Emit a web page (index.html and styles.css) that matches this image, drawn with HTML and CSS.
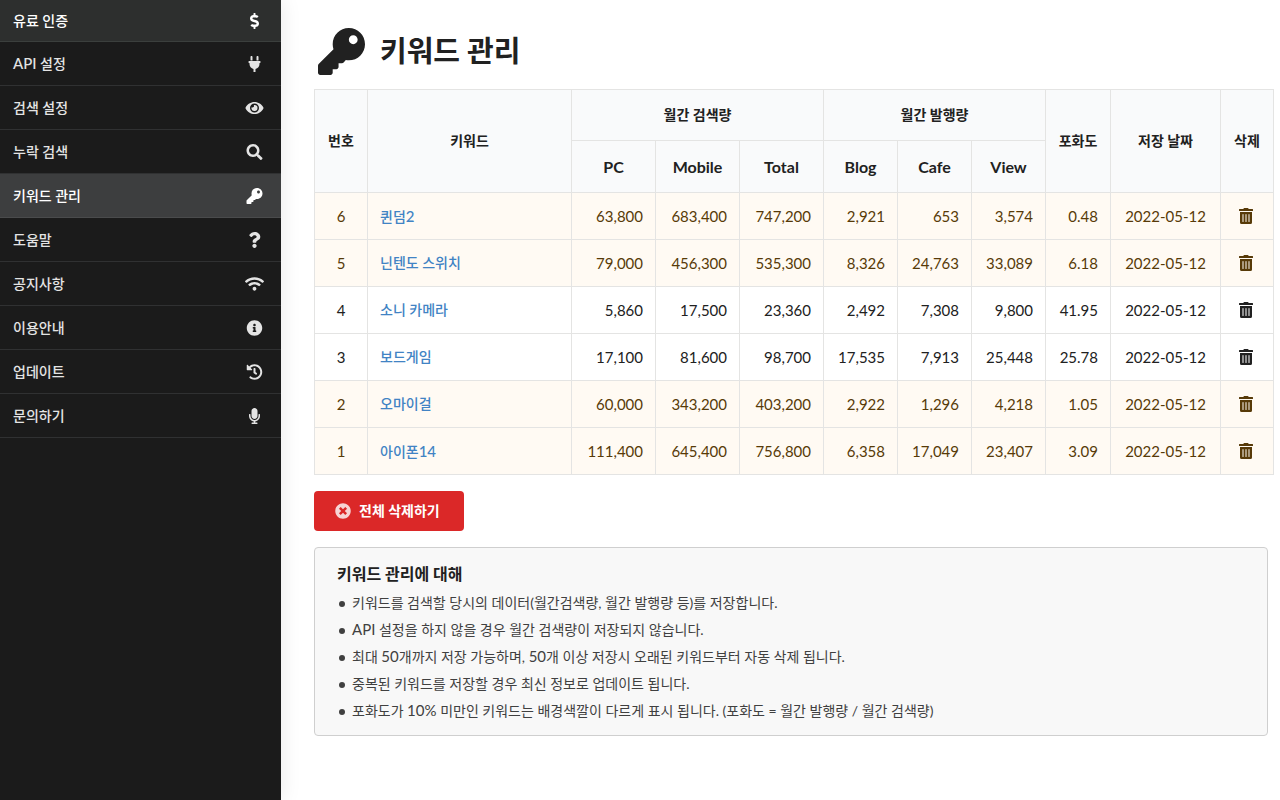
FILE: index.html
```html
<!DOCTYPE html>
<html lang="ko">
<head>
<meta charset="utf-8">
<meta name="viewport" content="width=device-width, initial-scale=1">
<title>키워드 관리</title>
<link rel="stylesheet" href="styles.css">
</head>
<body>
<svg class="sprite" aria-hidden="true">
  <symbol id="key" viewBox="0 0 512 512"><path d="M512 176.001C512 273.203 433.202 352 336 352c-11.22 0-22.19-1.062-32.827-3.069l-24.012 27.014A23.999 23.999 0 0 1 261.223 384H224v40c0 13.255-10.745 24-24 24h-40v40c0 13.255-10.745 24-24 24H24c-13.255 0-24-10.745-24-24v-78.059c0-6.365 2.529-12.47 7.029-16.971l161.802-161.802C163.108 213.814 160 195.271 160 176 160 78.798 238.797.001 335.999 0 433.488-.001 512 78.511 512 176.001zM336 128c0 26.51 21.49 48 48 48s48-21.49 48-48-21.49-48-48-48-48 21.49-48 48z"/></symbol>
  <symbol id="dollar" viewBox="0 0 288 512"><path d="M209.2 233.4l-108-31.6C88.7 198.2 80 186.5 80 173.5c0-16.3 13.2-29.5 29.5-29.5h66.3c12.2 0 24.2 3.7 34.2 10.5 6.1 4.1 14.3 3.1 19.5-2l34.8-34c7.1-6.9 6.1-18.4-1.8-24.5C238 74.8 207.4 64.1 176 64V16c0-8.8-7.2-16-16-16h-32c-8.8 0-16 7.2-16 16v48h-2.5C45.8 64-5.4 118.7.5 183.6c4.2 46.1 39.4 83.6 83.8 96.6l102.5 30c12.5 3.7 21.2 15.3 21.2 28.3 0 16.3-13.2 29.5-29.5 29.5h-66.3C100 368 88 364.3 78 357.5c-6.1-4.1-14.3-3.1-19.5 2l-34.8 34c-7.1 6.9-6.1 18.4 1.8 24.5 24.5 19.2 55.1 29.9 86.5 30v48c0 8.8 7.2 16 16 16h32c8.8 0 16-7.2 16-16v-48.2c46.6-.9 90.3-28.6 105.7-72.7 21.5-61.6-14.6-124.8-72.5-141.7z"/></symbol>
  <symbol id="plug" viewBox="0 0 384 512"><path d="M256 144V32c0-17.673 14.327-32 32-32s32 14.327 32 32v112h-64zm112 16H16c-8.837 0-16 7.163-16 16v32c0 8.837 7.163 16 16 16h16v32c0 77.406 54.969 141.971 128 156.796V512h64v-99.204c73.031-14.825 128-79.39 128-156.796v-32h16c8.837 0 16-7.163 16-16v-32c0-8.837-7.163-16-16-16zm-240-16V32c0-17.673-14.327-32-32-32S64 14.327 64 32v112h64z"/></symbol>
  <symbol id="eye" viewBox="0 0 576 512"><path d="M572.52 241.4C518.29 135.59 410.93 64 288 64S57.68 135.64 3.48 241.41a32.35 32.35 0 0 0 0 29.19C57.71 376.41 165.07 448 288 448s230.32-71.64 284.52-177.41a32.35 32.35 0 0 0 0-29.19zM288 400a144 144 0 1 1 144-144 143.93 143.93 0 0 1-144 144zm0-240a95.31 95.31 0 0 0-25.31 3.79 47.85 47.85 0 0 1-66.9 66.9A95.78 95.78 0 1 0 288 160z"/></symbol>
  <symbol id="search" viewBox="0 0 512 512"><path d="M505 442.7L405.3 343c-4.5-4.5-10.6-7-17-7H372c27.6-35.3 44-79.7 44-128C416 93.1 322.9 0 208 0S0 93.1 0 208s93.1 208 208 208c48.3 0 92.7-16.4 128-44v16.3c0 6.4 2.5 12.5 7 17l99.7 99.7c9.4 9.4 24.6 9.4 33.9 0l28.3-28.3c9.4-9.4 9.4-24.6.1-34zM208 336c-70.7 0-128-57.2-128-128 0-70.7 57.2-128 128-128 70.7 0 128 57.2 128 128 0 70.7-57.2 128-128 128z"/></symbol>
  <symbol id="question" viewBox="0 0 384 512"><path d="M202.021 0C122.202 0 70.503 32.703 29.914 91.026c-7.363 10.58-5.093 25.086 5.178 32.874l43.138 32.709c10.373 7.865 25.132 6.026 33.253-4.148 25.049-31.381 43.63-49.449 82.757-49.449 30.764 0 68.816 19.799 68.816 49.631 0 22.552-18.617 34.134-48.993 51.164-35.423 19.86-82.299 44.576-82.299 106.405V320c0 13.255 10.745 24 24 24h72.471c13.255 0 24-10.745 24-24v-5.773c0-42.86 125.268-44.645 125.268-160.627C377.504 66.256 286.902 0 202.021 0zM192 373.459c-38.196 0-69.271 31.075-69.271 69.271 0 38.195 31.075 69.27 69.271 69.27s69.271-31.075 69.271-69.271-31.075-69.27-69.271-69.27z"/></symbol>
  <symbol id="wifi" viewBox="0 0 640 512"><path d="M634.91 154.88C457.74-8.99 182.19-8.93 5.09 154.88c-6.66 6.16-6.79 16.59-.35 22.98l34.24 33.97c6.14 6.1 16.02 6.23 22.4.38 145.92-133.68 371.3-133.71 517.25 0 6.38 5.85 16.26 5.71 22.4-.38l34.24-33.97c6.43-6.39 6.3-16.82-.36-22.98zM320 352c-35.35 0-64 28.65-64 64s28.65 64 64 64 64-28.65 64-64-28.65-64-64-64zm202.67-83.59c-115.26-101.93-290.21-101.82-405.34 0-6.9 6.1-7.12 16.69-.57 23.15l34.44 33.99c6 5.92 15.66 6.32 22.05.8 83.95-72.57 209.74-72.41 293.49 0 6.39 5.52 16.05 5.13 22.05-.8l34.44-33.99c6.56-6.46 6.33-17.06-.56-23.15z"/></symbol>
  <symbol id="info" viewBox="0 0 512 512"><path d="M256 8C119.043 8 8 119.083 8 256c0 136.997 111.043 248 248 248s248-111.003 248-248C504 119.083 392.957 8 256 8zm0 110c23.196 0 42 18.804 42 42s-18.804 42-42 42-42-18.804-42-42 18.804-42 42-42zm56 254c0 6.627-5.373 12-12 12h-88c-6.627 0-12-5.373-12-12v-24c0-6.627 5.373-12 12-12h12v-64h-12c-6.627 0-12-5.373-12-12v-24c0-6.627 5.373-12 12-12h64c6.627 0 12 5.373 12 12v100h12c6.627 0 12 5.373 12 12v24z"/></symbol>
  <symbol id="history" viewBox="0 0 512 512"><path d="M504 255.531c.253 136.64-111.18 248.372-247.82 248.468-59.015.042-113.223-20.53-155.822-54.911-11.077-8.94-11.905-25.541-1.839-35.607l11.267-11.267c8.609-8.609 22.353-9.551 31.891-1.984C173.062 425.135 212.781 440 256 440c101.705 0 184-82.311 184-184 0-101.705-82.311-184-184-184-48.814 0-93.149 18.969-126.068 49.932l50.754 50.754c10.08 10.08 2.941 27.314-11.313 27.314H24c-8.837 0-16-7.163-16-16V38.627c0-14.254 17.234-21.393 27.314-11.314l49.372 49.372C129.209 34.136 189.552 8 256 8c136.81 0 247.747 110.78 248 247.531zm-180.912 78.784l9.823-12.63c8.138-10.463 6.253-25.542-4.21-33.679L288 256.349V152c0-13.255-10.745-24-24-24h-16c-13.255 0-24 10.745-24 24v135.651l65.409 50.874c10.463 8.137 25.541 6.253 33.679-4.21z"/></symbol>
  <symbol id="mic" viewBox="0 0 352 512"><path d="M176 352c53.02 0 96-42.98 96-96V96c0-53.02-42.98-96-96-96S80 42.98 80 96v160c0 53.02 42.98 96 96 96zm160-160h-16c-8.84 0-16 7.16-16 16v48c0 74.8-64.49 134.82-140.79 127.38C96.71 376.89 48 317.11 48 250.3V208c0-8.84-7.16-16-16-16H16c-8.84 0-16 7.16-16 16v40.16c0 89.64 63.97 169.55 152 181.69V464H96c-8.84 0-16 7.16-16 16v16c0 8.84 7.16 16 16 16h160c8.84 0 16-7.16 16-16v-16c0-8.84-7.16-16-16-16h-56v-33.77C285.71 418.47 352 344.9 352 256v-48c0-8.84-7.16-16-16-16z"/></symbol>
  <symbol id="trash" viewBox="0 0 448 512"><path d="M32 464a48 48 0 0 0 48 48h288a48 48 0 0 0 48-48V128H32zm272-256a16 16 0 0 1 32 0v224a16 16 0 0 1-32 0zm-96 0a16 16 0 0 1 32 0v224a16 16 0 0 1-32 0zm-96 0a16 16 0 0 1 32 0v224a16 16 0 0 1-32 0zM432 32H312l-9.4-18.7A24 24 0 0 0 281.1 0H166.8a23.72 23.72 0 0 0-21.4 13.3L136 32H16A16 16 0 0 0 0 48v32a16 16 0 0 0 16 16h416a16 16 0 0 0 16-16V48a16 16 0 0 0-16-16z"/></symbol>
  <symbol id="times" viewBox="0 0 512 512"><path d="M256 8C119 8 8 119 8 256s111 248 248 248 248-111 248-248S393 8 256 8zm121.6 313.1c4.7 4.7 4.7 12.3 0 17L338 377.6c-4.7 4.7-12.3 4.7-17 0L256 312l-65.1 65.6c-4.7 4.7-12.3 4.7-17 0L134.4 338c-4.7-4.7-4.7-12.3 0-17l65.6-65-65.6-65.1c-4.7-4.7-4.7-12.3 0-17l39.6-39.6c4.7-4.7 12.3-4.7 17 0l65 65.7 65.1-65.6c4.7-4.7 12.3-4.7 17 0l39.6 39.6c4.7 4.7 4.7 12.3 0 17L312 256l65.6 65.1z"/></symbol>
</svg>
<div class="app">
  <nav class="sidebar">
    <a class="item item-top" href="#">유료 인증<svg class="icon"><use href="#dollar"/></svg></a>
    <a class="item" href="#"><span><span class="latin">API</span> 설정</span><svg class="icon"><use href="#plug"/></svg></a>
    <a class="item" href="#">검색 설정<svg class="icon"><use href="#eye"/></svg></a>
    <a class="item" href="#">누락 검색<svg class="icon"><use href="#search"/></svg></a>
    <a class="item item-active" href="#" aria-current="page">키워드 관리<svg class="icon"><use href="#key"/></svg></a>
    <a class="item" href="#">도움말<svg class="icon"><use href="#question"/></svg></a>
    <a class="item" href="#">공지사항<svg class="icon"><use href="#wifi"/></svg></a>
    <a class="item" href="#">이용안내<svg class="icon"><use href="#info"/></svg></a>
    <a class="item" href="#">업데이트<svg class="icon"><use href="#history"/></svg></a>
    <a class="item" href="#">문의하기<svg class="icon"><use href="#mic"/></svg></a>
  </nav>
  <main class="main">
    <h1 class="title"><svg class="title-icon"><use href="#key"/></svg>키워드 관리</h1>
    <table class="table">
      <colgroup>
        <col class="col-no"><col><col class="col-search"><col class="col-search"><col class="col-search"><col class="col-post"><col class="col-post"><col class="col-post"><col class="col-rate"><col class="col-date"><col class="col-no">
      </colgroup>
      <thead>
        <tr><th rowspan="2">번호</th><th rowspan="2">키워드</th><th colspan="3">월간 검색량</th><th colspan="3">월간 발행량</th><th rowspan="2">포화도</th><th rowspan="2">저장 날짜</th><th rowspan="2">삭제</th></tr>
        <tr class="units"><th>PC</th><th>Mobile</th><th>Total</th><th>Blog</th><th>Cafe</th><th>View</th></tr>
      </thead>
      <tbody>
        <tr class="warm"><td class="mid">6</td><td class="word"><a href="#">퀸덤<span class="latin">2</span></a></td><td>63,800</td><td>683,400</td><td>747,200</td><td>2,921</td><td>653</td><td>3,574</td><td>0.48</td><td class="mid">2022-05-12</td><td class="mid"><button class="delete" type="button" aria-label="삭제"><svg class="trash"><use href="#trash"/></svg></button></td></tr>
        <tr class="warm"><td class="mid">5</td><td class="word"><a href="#">닌텐도 스위치</a></td><td>79,000</td><td>456,300</td><td>535,300</td><td>8,326</td><td>24,763</td><td>33,089</td><td>6.18</td><td class="mid">2022-05-12</td><td class="mid"><button class="delete" type="button" aria-label="삭제"><svg class="trash"><use href="#trash"/></svg></button></td></tr>
        <tr><td class="mid">4</td><td class="word"><a href="#">소니 카메라</a></td><td>5,860</td><td>17,500</td><td>23,360</td><td>2,492</td><td>7,308</td><td>9,800</td><td>41.95</td><td class="mid">2022-05-12</td><td class="mid"><button class="delete" type="button" aria-label="삭제"><svg class="trash"><use href="#trash"/></svg></button></td></tr>
        <tr><td class="mid">3</td><td class="word"><a href="#">보드게임</a></td><td>17,100</td><td>81,600</td><td>98,700</td><td>17,535</td><td>7,913</td><td>25,448</td><td>25.78</td><td class="mid">2022-05-12</td><td class="mid"><button class="delete" type="button" aria-label="삭제"><svg class="trash"><use href="#trash"/></svg></button></td></tr>
        <tr class="warm"><td class="mid">2</td><td class="word"><a href="#">오마이걸</a></td><td>60,000</td><td>343,200</td><td>403,200</td><td>2,922</td><td>1,296</td><td>4,218</td><td>1.05</td><td class="mid">2022-05-12</td><td class="mid"><button class="delete" type="button" aria-label="삭제"><svg class="trash"><use href="#trash"/></svg></button></td></tr>
        <tr class="warm"><td class="mid">1</td><td class="word"><a href="#">아이폰<span class="latin">14</span></a></td><td>111,400</td><td>645,400</td><td>756,800</td><td>6,358</td><td>17,049</td><td>23,407</td><td>3.09</td><td class="mid">2022-05-12</td><td class="mid"><button class="delete" type="button" aria-label="삭제"><svg class="trash"><use href="#trash"/></svg></button></td></tr>
      </tbody>
    </table>
    <button class="clear" type="button"><svg class="clear-icon"><use href="#times"/></svg>전체 삭제하기</button>
    <section class="note">
      <h2 class="note-title">키워드 관리에 대해</h2>
      <ul class="note-list">
        <li>키워드를 검색할 당시의 데이터(월간검색량, 월간 발행량 등)를 저장합니다.</li>
        <li><span class="latin">API</span> 설정을 하지 않을 경우 월간 검색량이 저장되지 않습니다.</li>
        <li>최대 <span class="latin">50</span>개까지 저장 가능하며, <span class="latin">50</span>개 이상 저장시 오래된 키워드부터 자동 삭제 됩니다.</li>
        <li>중복된 키워드를 저장할 경우 최신 정보로 업데이트 됩니다.</li>
        <li>포화도가 <span class="latin">10%</span> 미만인 키워드는 배경색깔이 다르게 표시 됩니다. (포화도 = 월간 발행량 / 월간 검색량)</li>
      </ul>
    </section>
  </main>
</div>
</body>
</html>
```
FILE: styles.css
```css
* { box-sizing: border-box; }
body {
  margin: 0;
  background: #fff;
  color: #212121;
  font-family: Lato, "Noto Sans CJK KR", sans-serif;
  font-size: 14px;
  line-height: 20px;
}
.sprite { display: none; }
svg { fill: currentColor; }
.latin { font-size: 15px; }
.app { display: flex; min-height: 100vh; }

.sidebar {
  flex: none;
  width: 281px;
  background: #1b1b1b;
  box-shadow: 0 0 20px #e8e8e8;
}
.item {
  display: flex;
  align-items: center;
  justify-content: space-between;
  height: 44px;
  padding: 0 17px 0 13px;
  border-bottom: 1px solid #303132;
  color: #e4e4e4;
  font-weight: 500;
  text-decoration: none;
}
.item-top { height: 42px; background: #2d2f2e; border-color: #3b3f3d; color: #fff; }
.item-active { background: #3d3e3f; border-color: #4a4b4c; color: #fff; }
.icon { width: 19px; height: 16px; }

.main { flex: 1; min-width: 0; padding: 26px 6px 26px 33px; }
.title {
  display: flex;
  align-items: center;
  gap: 15px;
  height: 50px;
  margin: 0 0 13px;
  padding-left: 4px;
  font-size: 29px;
  font-weight: 700;
}
.title-icon { width: 47px; height: 47px; }

.table {
  width: 100%;
  table-layout: fixed;
  border-collapse: collapse;
  border: 1px solid #dcdddd;
}
.col-no { width: 53px; }
.col-search { width: 84px; }
.col-post { width: 74px; }
.col-rate { width: 65px; }
.col-date { width: 110px; }
.table th, .table td { border: 1px solid #e4e4e3; padding: 0 12px; }
.table th { height: 51px; padding: 0; background: #f9fafb; font-weight: 700; }
.table .units th { height: 52px; font-size: 16px; }
.table td { height: 47px; font-size: 15px; text-align: right; }
.table .mid { padding: 0; text-align: center; }
.table .word { font-size: 14px; font-weight: 500; text-align: left; }
.word a { color: #4183c4; text-decoration: none; }
.warm { background: #fffaf3; color: #573a08; }
.delete {
  display: inline-flex;
  padding: 4px 6px 4px 4px;
  border: 0;
  background: none;
  color: inherit;
  vertical-align: middle;
}
.trash { width: 14px; height: 16px; }

.clear {
  display: flex;
  align-items: center;
  gap: 8px;
  height: 40px;
  margin: 16px 0;
  padding: 0 24px 0 21px;
  border: 0;
  border-radius: 4px;
  background: #db2828;
  color: #fff;
  font: inherit;
  font-weight: 700;
}
.clear-icon { width: 16px; height: 16px; opacity: 0.8; }

.note {
  margin-right: 6px;
  padding: 15px 22px 11px;
  border: 1px solid #cfcfcf;
  border-radius: 4px;
  background: #f8f8f8;
  color: #404040;
}
.note-title { margin: 0 0 4px; color: #212121; font-size: 16px; line-height: 22px; }
.note-list { margin: 0; padding: 0; list-style: none; line-height: 27px; }
.note-list li::before {
  content: "";
  display: inline-block;
  width: 6px;
  height: 6px;
  margin: 0 7px 0 2px;
  border-radius: 50%;
  background: currentColor;
  vertical-align: 1px;
}
```
